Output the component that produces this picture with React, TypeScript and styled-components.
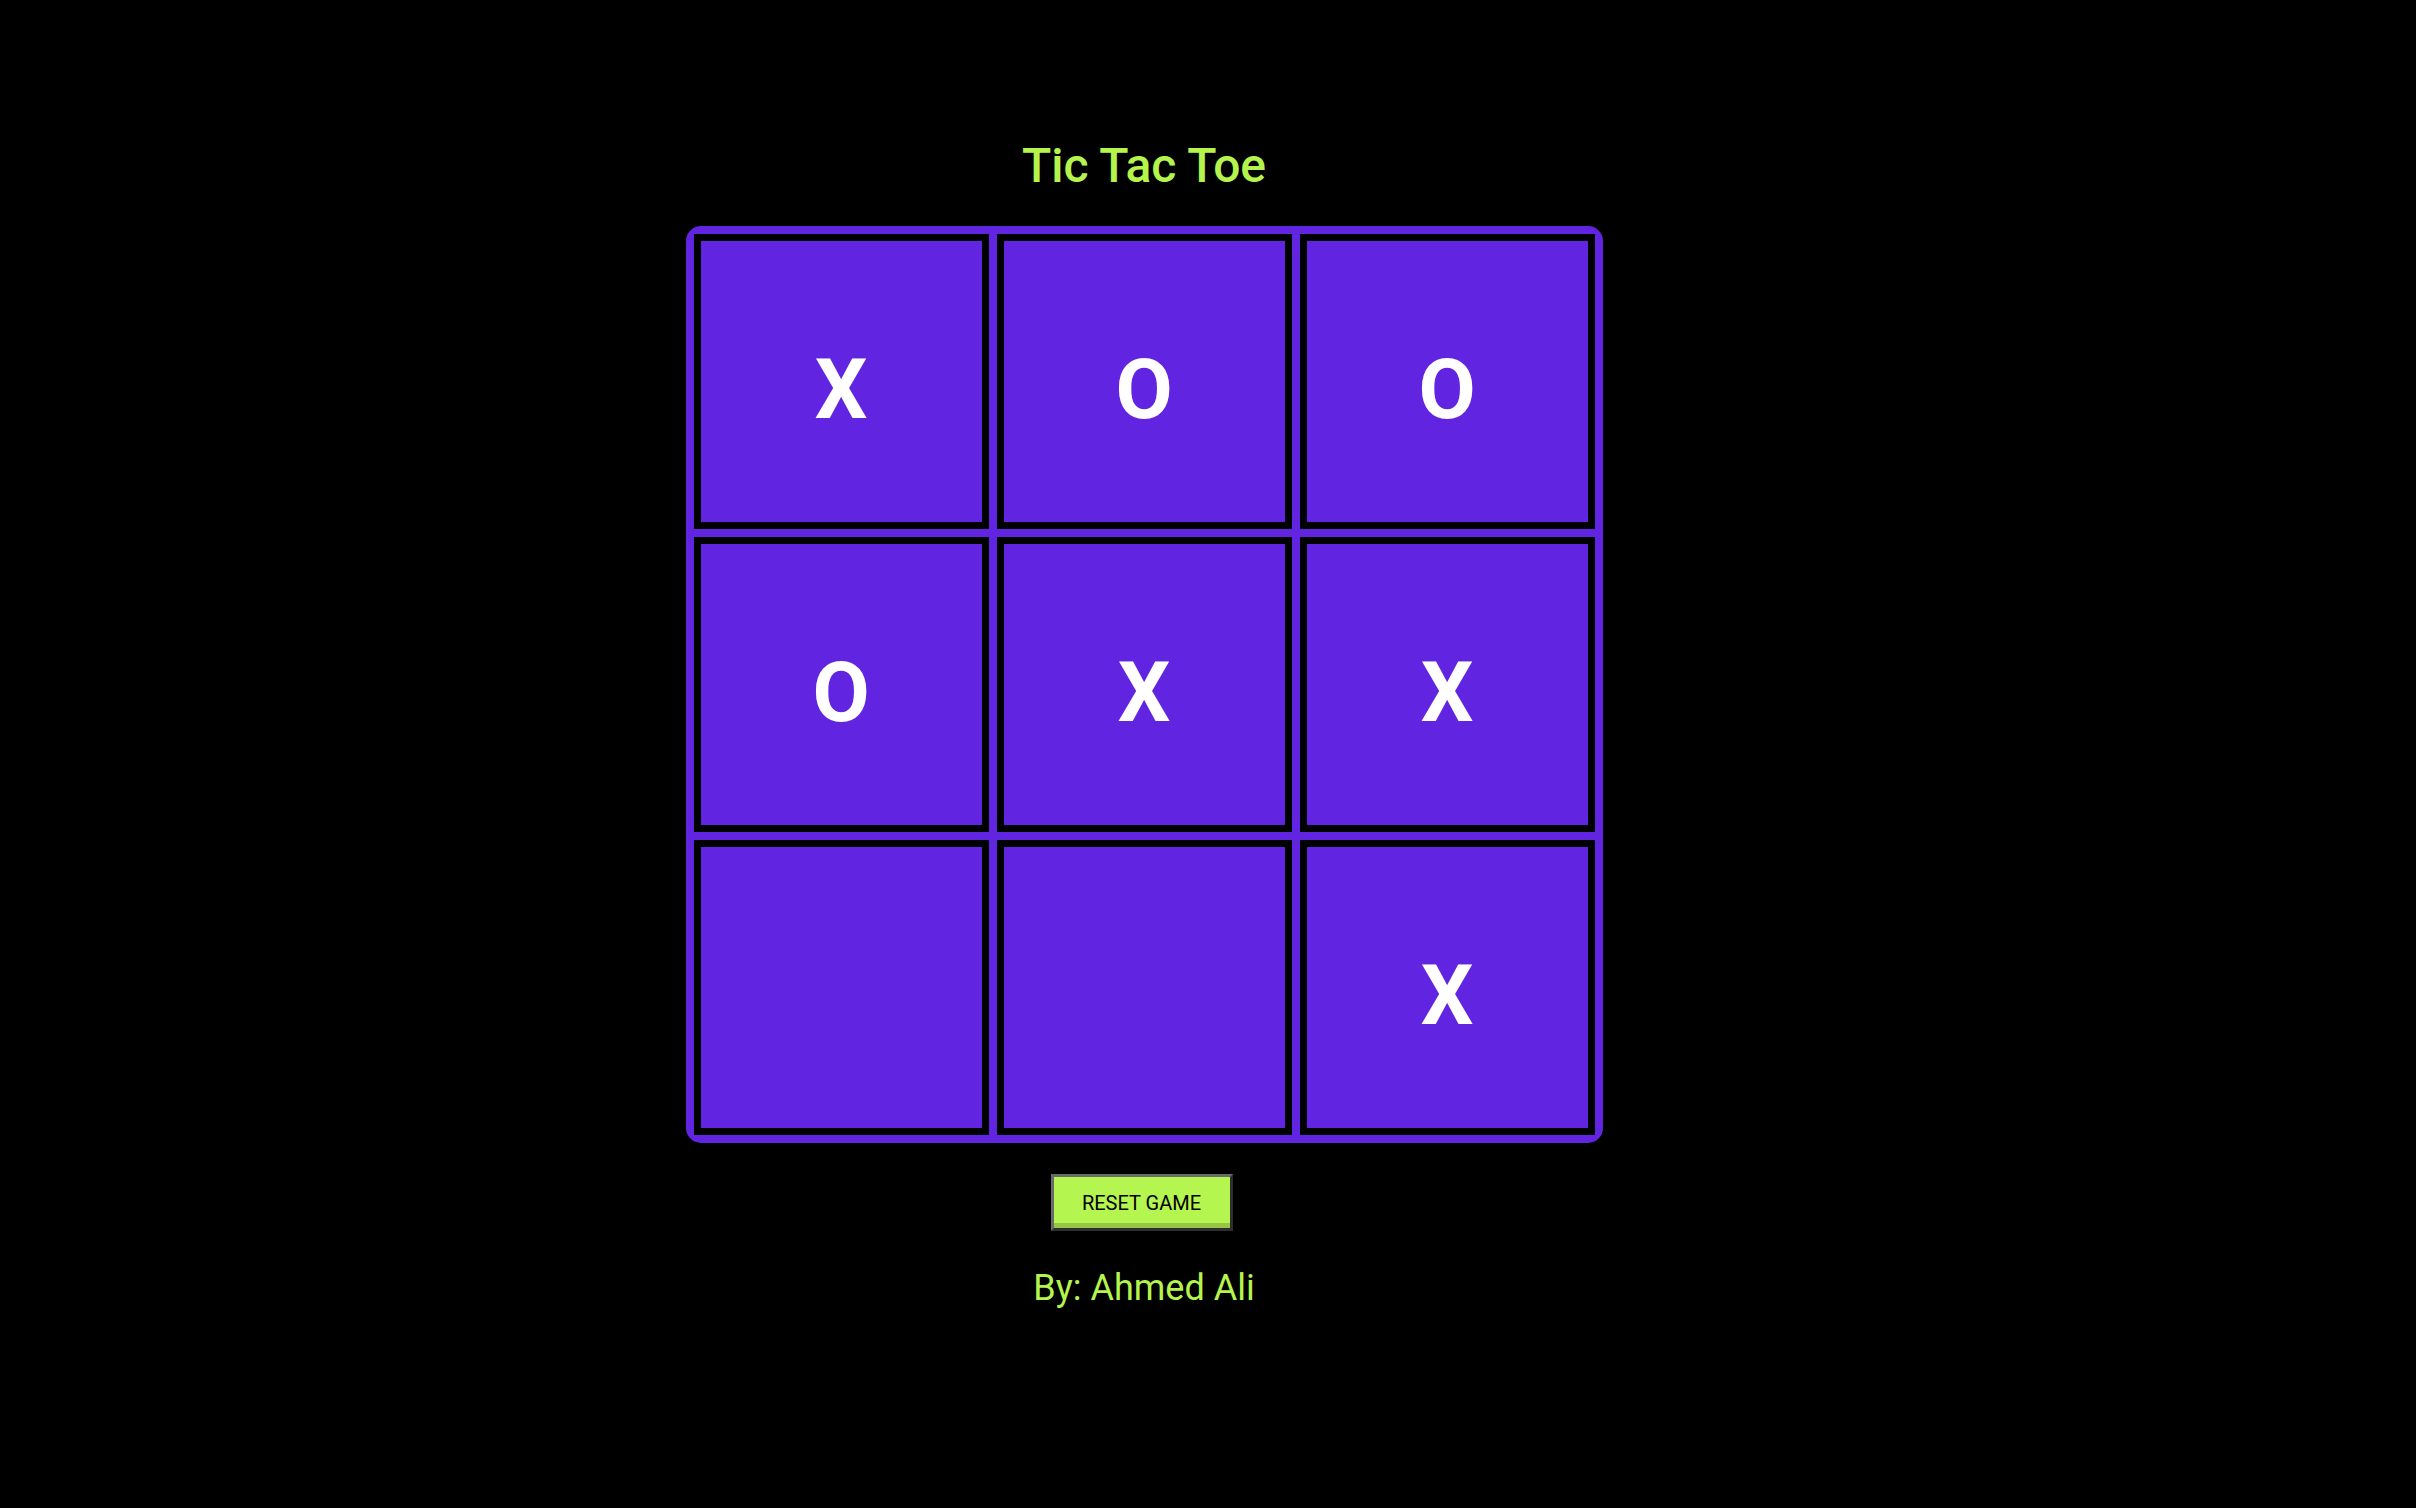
import React from 'react';
import styled, { createGlobalStyle } from 'styled-components';

const GlobalStyle = createGlobalStyle`
  html, body {
    margin: 0;
    padding: 0;
    background: #000000;
  }

  body {
    font-family: Roboto, "Liberation Sans", Arial, sans-serif;
    min-height: 1508px;
  }
`;

const Page = styled.main`
  display: flex;
  flex-direction: column;
  align-items: center;
  width: 2288px;
  padding-top: 137px;
`;

const Title = styled.h1`
  margin: 0;
  color: #b5f44d;
  font-size: 48px;
  font-weight: 500;
  line-height: normal;
`;

const Board = styled.div`
  display: grid;
  grid-template-columns: repeat(3, 295px);
  grid-auto-rows: 295px;
  gap: 8px;
  margin-top: 32px;
  padding: 8px;
  background: #6125e2;
  border-radius: 15px;
`;

const Cell = styled.button`
  display: flex;
  align-items: center;
  justify-content: center;
  box-sizing: border-box;
  width: 295px;
  height: 295px;
  padding: 15px 0 0;
  border: 7px solid #000000;
  background: #6125e2;
  color: #ffffff;
  cursor: pointer;
  font-family: Roboto, "Liberation Sans", Arial, sans-serif;
  font-size: 83px;
  font-weight: 700;
  line-height: normal;
`;

const ResetButton = styled.button`
  box-sizing: border-box;
  width: 182px;
  height: 57px;
  margin: 31px 5px 0 0;
  padding: 0;
  border: 3px solid;
  border-color: #6a6a6a #2e2e2e #2e2e2e #6a6a6a;
  background: #b5f550;
  box-shadow: inset 0 -5px 0 #97c646;
  color: #000000;
  cursor: pointer;
  font-family: Roboto, "Liberation Sans", Arial, sans-serif;
  font-size: 20px;
  text-transform: uppercase;
`;

const Author = styled.p`
  margin: 36px 0 0;
  color: #b5f44d;
  font-size: 36px;
  font-weight: 400;
  line-height: normal;
`;

type Mark = 'X' | 'O' | null;

const initialBoard: Mark[] = ['X', 'O', 'O', 'O', 'X', 'X', null, null, 'X'];

const App: React.FC = () => {
  const [board, setBoard] = React.useState<Mark[]>(initialBoard);

  return (
    <>
      <GlobalStyle />
      <Page>
        <Title>Tic Tac Toe</Title>
        <Board>
          {board.map((mark, i) => (
            <Cell key={i} type="button">
              {mark}
            </Cell>
          ))}
        </Board>
        <ResetButton type="button" onClick={() => setBoard(Array(9).fill(null))}>
          Reset Game
        </ResetButton>
        <Author>By: Ahmed Ali</Author>
      </Page>
    </>
  );
};

export default App;
